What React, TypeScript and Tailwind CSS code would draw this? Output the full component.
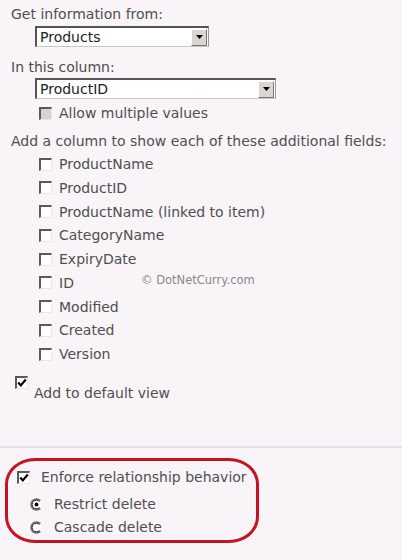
import React from 'react'

const font = { fontFamily: '"DejaVu Sans", Verdana, sans-serif' }

function Box({ checked = false, disabled = false }: { checked?: boolean; disabled?: boolean }) {
    return (
        <span
            className={`relative inline-block h-[13px] w-[13px] shrink-0 border-t-[2px] border-l-[2px] border-r border-b border-t-[#5a5a5a] border-l-[#5a5a5a] border-r-[#e8e6e8] border-b-[#e8e6e8] ${disabled ? 'bg-[#d6d3d6]' : 'bg-white'}`}
        >
            {checked && (
                <svg viewBox="0 0 10 10" className="absolute left-[0px] top-[0px] h-[10px] w-[10px]">
                    <path d="M1.2 4.6 L3.8 7.4 L8.8 1.5" fill="none" stroke="#000" strokeWidth="2.2" />
                </svg>
            )}
        </span>
    )
}

function Radio({ checked = false }: { checked?: boolean }) {
    return (
        <svg viewBox="0 0 13 13" className="h-[13px] w-[13px] shrink-0">
            <circle cx="6.5" cy="6.5" r="5.6" fill="#fff" />
            <path d="M10.4 2.6 A5.5 5.5 0 1 0 10.4 10.4" fill="none" stroke="#6a6a6a" strokeWidth="1.5" />
            <path d="M9.5 3.5 A4.3 4.3 0 1 0 9.5 9.5" fill="none" stroke="#222" strokeWidth="1" />
            {checked && <circle cx="6.5" cy="6.5" r="1.9" fill="#000" />}
        </svg>
    )
}

function Select({ value, width }: { value: string; width: string }) {
    return (
        <div className={`flex h-[21px] items-center border-t-[2px] border-l-[2px] border-r border-b border-t-[#555] border-l-[#555] border-r-[#9a9a9a] border-b-[#c8c8c8] bg-white ${width}`}>
            <span className="flex-1 pl-[3px] text-[14px] leading-[16px] text-[#222]">{value}</span>
            <span className="mr-[1px] flex h-[17px] w-[16px] items-center justify-center border border-t-[#fff] border-l-[#fff] border-r-[#777] border-b-[#777] bg-[#d9d6d2]">
                <svg viewBox="0 0 7 4" className="h-[4px] w-[7px]">
                    <path d="M0 0 H7 L3.5 4 Z" fill="#000" />
                </svg>
            </span>
        </div>
    )
}

const fields = ['ProductName', 'ProductID', 'ProductName (linked to item)', 'CategoryName', 'ExpiryDate', 'ID', 'Modified', 'Created', 'Version']

export default function App() {
    return (
        <div style={font} className="relative h-[560px] w-[402px] overflow-hidden bg-[#f8f4f8] text-[14px] text-[#4f4f4f]">
            <div className="px-[11px] pt-[6px]">
                <div className="leading-[16px]">Get information from:</div>
                <div className="mt-[4px] pl-[24px]">
                    <Select value="Products" width="w-[174px]" />
                </div>
                <div className="mt-[12px] leading-[16px]">In this column:</div>
                <div className="mt-[3px] pl-[24px]">
                    <Select value="ProductID" width="w-[241px]" />
                </div>
                <div className="mt-[6px] flex items-center gap-[7px] pl-[28px]">
                    <Box disabled />
                    <span className="leading-[16px]">Allow multiple values</span>
                </div>
                <div className="mt-[12px] leading-[16px]">Add a column to show each of these additional fields:</div>
                <div className="mt-[7px] flex flex-col gap-[7.75px] pl-[28px]">
                    {fields.map((f) => (
                        <div key={f} className="flex items-center gap-[7px]">
                            <Box />
                            <span className="leading-[16px]">{f}</span>
                        </div>
                    ))}
                </div>
                <div className="mt-[14px] flex items-start gap-[6px] pl-[4px]">
                    <Box checked />
                    <span className="mt-[9px] leading-[16px]">Add to default view</span>
                </div>
            </div>

            <div className="mt-[45px] h-[2px] w-full bg-[#e4dfe4]" />

            <div className="ml-[5px] mt-[10px] w-[254px] rounded-[30px/26px] border-[3px] border-[#c4141f] pb-[5px] pl-[8px] pt-[8px]">
                <div className="flex items-center gap-[11px] pl-[1px]">
                    <Box checked />
                    <span className="leading-[16px]">Enforce relationship behavior</span>
                </div>
                <div className="mt-[11px] flex flex-col gap-[7px] pl-[14px]">
                    <div className="flex items-center gap-[11px]">
                        <Radio checked />
                        <span className="leading-[16px]">Restrict delete</span>
                    </div>
                    <div className="flex items-center gap-[11px]">
                        <Radio />
                        <span className="leading-[16px]">Cascade delete</span>
                    </div>
                </div>
            </div>

            <div className="absolute left-[141px] top-[272px] text-[11.5px] leading-[16px] text-[#8a8a8a]">© DotNetCurry.com</div>
        </div>
    )
}
